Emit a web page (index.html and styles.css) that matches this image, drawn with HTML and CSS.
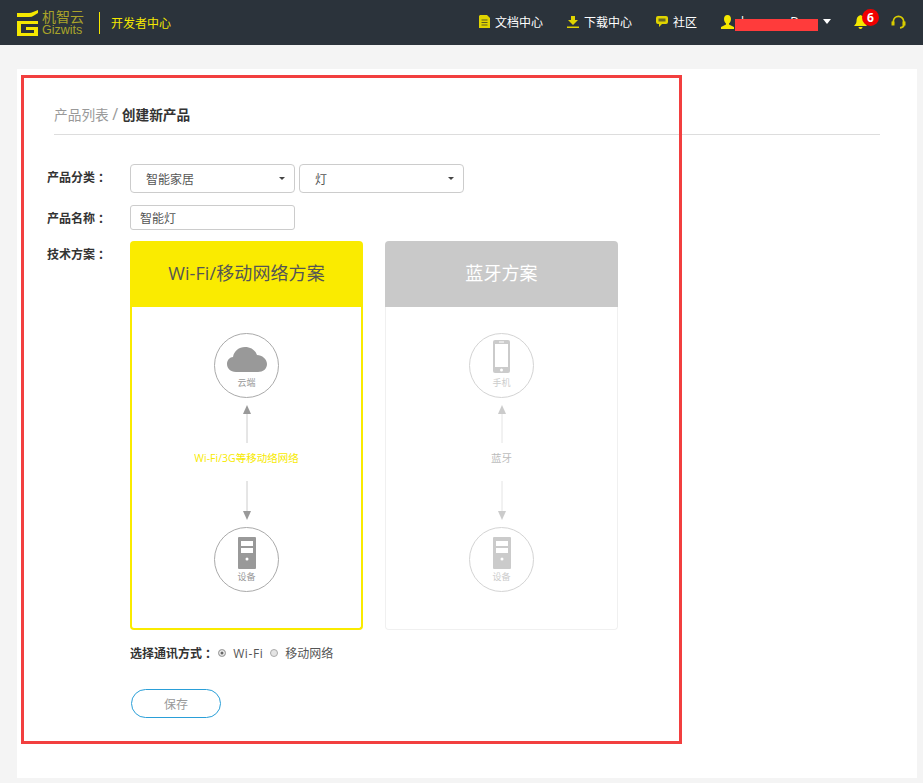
FILE: index.html
```html
<!DOCTYPE html>
<html lang="zh-CN">
<head>
    <meta charset="UTF-8">
    <meta name="viewport" content="width=device-width, initial-scale=1.0">
    <title>创建新产品 - 机智云开发者中心</title>
    <link rel="stylesheet" href="styles.css">
</head>
<body>
    <header class="topbar">
        <a class="logo" href="#">
            <svg class="logo-mark" width="21" height="27" viewBox="0 0 21 27">
                <path d="M0 4H12Q14 4 16 3L21 1V4L17 6.500Q15 8 12 8H0Z" fill="#f5e800"/>
                <path d="M0 12H21V15H4V24H17V21H9V18H21V27H0Z" fill="#f5e800"/>
            </svg>
            <span class="logo-text">
                <span class="logo-cn">机智云</span>
                <span class="logo-en">Gizwits</span>
            </span>
        </a>
        <span class="site-name">开发者中心</span>
        <nav class="topnav">
            <a href="#">
                <svg width="11" height="13" viewBox="0 0 11 13"><path d="M1 0H8L11 3V13H0V1Z" fill="#e0d400"/><path d="M2.500 5H8.500M2.500 7.500H8.500M2.500 10H8.500" stroke="#5c5c20" stroke-width="1"/></svg>
                文档中心
            </a>
            <a href="#">
                <svg width="12" height="12" viewBox="0 0 12 12"><path d="M4 0H8V4H11L6 9L1 4H4ZM0 10.500H12V12H0Z" fill="#e0d400"/></svg>
                下载中心
            </a>
            <a href="#">
                <svg width="12" height="11" viewBox="0 0 12 11"><path d="M2 0H10Q12 0 12 2V6Q12 8 10 8H6L3 11V8H2Q0 8 0 6V2Q0 0 2 0Z" fill="#e0d400"/><path d="M2.500 2.500H9.500V5.500H2.500Z" fill="#6b6a22"/></svg>
                社区
            </a>
            <span class="user">
                <svg width="13" height="14" viewBox="0 0 13 14"><path d="M6.500 0C9 0 10 2 10 4C10 6 9 7.500 8 8.500V9.500L13 12V14H0V12L5 9.500V8.500C4 7.500 3 6 3 4C3 2 4 0 6.500 0Z" fill="#f5e800"/></svg>
                <span class="user-name"><span>l</span><span>D</span></span>
                <span class="redact"></span>
                <span class="caret-white"></span>
            </span>
            <span class="bell">
                <svg width="13" height="14" viewBox="0 0 13 14"><path d="M6.500 0C9.500 1 10.500 3 10.500 6C10.500 8 11.500 9.500 13 11H0C1.500 9.500 2.500 8 2.500 6C2.500 3 3.500 1 6.500 0ZM4.500 12H8.500C8.500 14.500 4.500 14.500 4.500 12Z" fill="#f5e800"/></svg>
                <span class="badge">6</span>
            </span>
            <svg class="headset" width="15" height="14" viewBox="0 0 15 14"><path d="M2.200 9V7C2.200 -0.500 12.800 -0.500 12.800 7V10Q12.800 12.500 9 12.800" fill="none" stroke="#d8cc00" stroke-width="1.800"/><path d="M0.500 6.500H3.500V10.500H0.500ZM11.500 6.500H14.500V10.500H11.500Z" fill="#d8cc00"/></svg>
        </nav>
    </header>

    <main class="page">
        <section class="panel">
            <div class="crumbs"><a href="#">产品列表</a> <i>/</i> <b>创建新产品</b></div>

            <div class="row row-cat">
                <label class="row-label">产品分类 ：</label>
                <div class="fake-select">智能家居<span class="caret"></span></div>
                <div class="fake-select">灯<span class="caret"></span></div>
            </div>
            <div class="row row-name">
                <label class="row-label">产品名称 ：</label>
                <input class="text-input" type="text" value="智能灯">
            </div>
            <div class="row row-plan">
                <label class="row-label">技术方案 ：</label>
                <div class="plan-list">
                    <div class="plan plan-on">
                        <h3 class="plan-head">Wi-Fi/移动网络方案</h3>
                        <div class="plan-body">
                            <div class="node">
                                <svg width="40" height="26" viewBox="0 0 40 26"><path d="M9 26C3 26 0 22 0 18C0 14 3 11 6 11C7 5 12 1 18 1C24 1 28 4 30 9C35 9 40 13 40 18C40 23 36 26 31 26Z" fill="#999"/></svg>
                                <span>云端</span>
                            </div>
                            <svg class="arrow" width="10" height="39" viewBox="0 0 10 39"><path d="M5 9V38" stroke="#ccc" stroke-width="1"/><path d="M5 0L9 9H1Z" fill="#999"/></svg>
                            <p class="link-name">Wi-Fi/3G等移动络网络</p>
                            <svg class="arrow arrow-down" width="10" height="39" viewBox="0 0 10 39"><path d="M5 0V30" stroke="#ccc" stroke-width="1"/><path d="M5 39L9 30H1Z" fill="#999"/></svg>
                            <div class="node node-device">
                                <svg width="18" height="32" viewBox="0 0 18 32"><path d="M1 0H17Q18 0 18 1V31Q18 32 17 32H1Q0 32 0 31V1Q0 0 1 0Z" fill="#999"/><path d="M3 4H15V9H3ZM3 11H15V16H3Z" fill="#fff"/><circle cx="9" cy="22" r="1.500" fill="#fff"/></svg>
                                <span>设备</span>
                            </div>
                        </div>
                    </div>
                    <div class="plan plan-off">
                        <h3 class="plan-head">蓝牙方案</h3>
                        <div class="plan-body">
                            <div class="node node-phone">
                                <svg width="17" height="33" viewBox="0 0 17 33"><path d="M2 0H15Q17 0 17 2V31Q17 33 15 33H2Q0 33 0 31V2Q0 0 2 0Z" fill="#999"/><path d="M2 4H15V27H2Z" fill="#fff"/><circle cx="8.500" cy="30" r="1.500" fill="#fff"/><path d="M6 2H11" stroke="#fff" stroke-width="1"/></svg>
                                <span>手机</span>
                            </div>
                            <svg class="arrow" width="10" height="39" viewBox="0 0 10 39"><path d="M5 9V38" stroke="#ccc" stroke-width="1"/><path d="M5 0L9 9H1Z" fill="#999"/></svg>
                            <p class="link-name">蓝牙</p>
                            <svg class="arrow arrow-down" width="10" height="39" viewBox="0 0 10 39"><path d="M5 0V30" stroke="#ccc" stroke-width="1"/><path d="M5 39L9 30H1Z" fill="#999"/></svg>
                            <div class="node node-device">
                                <svg width="18" height="32" viewBox="0 0 18 32"><path d="M1 0H17Q18 0 18 1V31Q18 32 17 32H1Q0 32 0 31V1Q0 0 1 0Z" fill="#999"/><path d="M3 4H15V9H3ZM3 11H15V16H3Z" fill="#fff"/><circle cx="9" cy="22" r="1.500" fill="#fff"/></svg>
                                <span>设备</span>
                            </div>
                        </div>
                    </div>
                </div>
            </div>

            <div class="comm">
                <b>选择通讯方式 ：</b>
                <span class="radio radio-on"></span><span class="comm-opt comm-wifi">Wi-Fi</span>
                <span class="radio"></span><span class="comm-opt">移动网络</span>
            </div>
            <button class="save" type="button">保存</button>
        </section>
    </main>

    <div class="mark-box"></div>
</body>
</html>
```

FILE: styles.css
```css
* {
    box-sizing: border-box;
}
body {
    font-family: "Open Sans", "Noto Sans CJK SC", sans-serif;
    font-size: 12px;
    color: #333;
    background-color: #f4f4f4;
    margin: 0;
    padding: 0;
}
a {
    color: inherit;
    text-decoration: none;
}
.topbar {
    display: flex;
    align-items: center;
    height: 45px;
    padding: 0 17px;
    background: #2b333b;
}
.logo {
    display: flex;
    align-items: center;
    gap: 4px;
    width: 67px;
}
.logo-text {
    display: flex;
    flex-direction: column;
    color: #a9a32a;
}
.logo-cn {
    font-size: 14px;
    line-height: 15px;
}
.logo-en {
    font-size: 12.500px;
    line-height: 12px;
    font-family: "Liberation Sans", sans-serif;
}
.site-name {
    margin-left: 15px;
    padding-left: 11px;
    height: 22px;
    line-height: 23px;
    border-left: 1px solid #f5e800;
    color: #f5e800;
}
.topnav {
    display: flex;
    align-items: center;
    margin-left: auto;
    margin-top: -2px;
    color: #fff;
}
.topnav a {
    display: flex;
    align-items: center;
    gap: 5px;
    margin-right: 24px;
}
.user {
    position: relative;
    display: flex;
    align-items: center;
    width: 111px;
}
.user-name {
    display: flex;
    justify-content: space-between;
    width: 58px;
    margin-left: 7px;
}
.redact {
    position: absolute;
    left: 14px;
    top: 6px;
    width: 83px;
    height: 12px;
    background: #ff3b3b;
}
.caret-white {
    position: absolute;
    left: 102px;
    top: 6px;
    border-left: 4.500px solid transparent;
    border-right: 4.500px solid transparent;
    border-top: 5px solid #fff;
}
.bell {
    position: relative;
    display: flex;
    width: 37px;
    margin-left: 22px;
}
.badge {
    position: absolute;
    left: 8px;
    top: -6px;
    width: 17px;
    height: 17px;
    border-radius: 50%;
    background: #f00000;
    color: #fff;
    font-size: 12px;
    font-weight: 700;
    line-height: 17px;
    text-align: center;
}
.page {
    padding: 24px 6px 5px 17px;
}
.panel {
    height: 709px;
    padding: 0 37px;
    background: #fff;
}
.crumbs {
    height: 66px;
    padding-top: 35px;
    margin-bottom: 29px;
    border-bottom: 1px solid #ddd;
    font-size: 13.700px;
    line-height: 21px;
    color: #999;
}
.crumbs i {
    font-style: normal;
    font-size: 16px;
}
.crumbs b {
    color: #333;
}
.row {
    display: flex;
    margin-left: -7px;
}
.row-label {
    width: 83px;
    font-weight: 700;
    color: #333;
}
.row-cat {
    align-items: center;
    gap: 4px;
    height: 29px;
}
.row-cat .row-label {
    margin-right: -4px;
    margin-top: -4px;
}
.fake-select {
    position: relative;
    width: 165px;
    height: 29px;
    padding-left: 15px;
    border: 1px solid #ccc;
    border-radius: 4px;
    line-height: 29px;
    color: #555;
}
.caret {
    position: absolute;
    right: 9px;
    top: 12px;
    border-left: 3px solid transparent;
    border-right: 3px solid transparent;
    border-top: 3px solid #444;
}
.row-name {
    align-items: center;
    margin-top: 12px;
}
.text-input {
    width: 165px;
    height: 25px;
    padding: 0 9px;
    border: 1px solid #ccc;
    border-radius: 3px;
    font: inherit;
    color: #555;
}
.row-plan {
    margin-top: 11px;
}
.row-plan .row-label {
    padding-top: 4px;
}
.plan-list {
    display: flex;
    gap: 22px;
}
.plan {
    width: 233px;
    height: 389px;
    border-radius: 4px;
    background: #fff;
}
.plan-head {
    height: 66px;
    margin: 0;
    border-radius: 4px 4px 0 0;
    font-size: 18px;
    font-weight: 400;
    letter-spacing: 0.100px;
    line-height: 64px;
    text-align: center;
}
.plan-body {
    display: flex;
    flex-direction: column;
    align-items: center;
    height: 323px;
    padding-top: 26px;
    border-radius: 0 0 4px 4px;
}
.plan-on .plan-head {
    background: #faeb00;
    color: #555;
}
.plan-on .plan-body {
    border: 2px solid #faeb00;
    border-top: 0;
}
.plan-off .plan-head {
    background: #c9c9c9;
    color: #fff;
}
.plan-off .plan-body {
    border: 1px solid #f0f0f0;
    border-top: 0;
}
.plan-off .node,
.plan-off .arrow,
.plan-off .link-name {
    opacity: 0.5;
}
.node {
    display: flex;
    flex-direction: column;
    align-items: center;
    flex-shrink: 0;
    width: 65px;
    height: 65px;
    padding-top: 12px;
    border: 1px solid #aaa;
    border-radius: 50%;
    background: #fff;
}
.node span {
    margin-top: 5px;
    font-size: 9px;
    line-height: 12px;
    color: #999;
}
.node-device {
    padding-top: 9px;
}
.node-device span {
    margin-top: 2px;
}
.node-phone {
    padding-top: 6px;
}
.node-phone span {
    margin-top: 4px;
}
.arrow {
    display: block;
    margin-top: 7px;
}
.arrow-down {
    margin-top: 16px;
    margin-bottom: 7px;
}
.link-name {
    margin: 7px 0 0;
    font-size: 10.500px;
    line-height: 14px;
    color: #f7ea00;
}
.plan-off .link-name {
    color: #777;
}
.comm {
    display: flex;
    align-items: center;
    height: 18px;
    margin-top: 14px;
    margin-left: 76px;
    color: #555;
}
.comm b {
    color: #333;
    margin-right: 1px;
}
.radio {
    width: 8px;
    height: 8px;
    margin-right: 7px;
    border: 1px solid #aaa;
    border-radius: 50%;
    background: #e4e4e4;
}
.radio-on {
    background: #666;
    box-shadow: inset 0 0 0 1.500px #eee;
}
.comm-opt {
    margin-right: 7px;
}
.comm-wifi {
    letter-spacing: 0.600px;
}
.save {
    display: block;
    width: 90px;
    height: 29px;
    margin: 27px 0 0 77px;
    border: 1px solid #2a9fd8;
    border-radius: 15px;
    background: #fff;
    font: inherit;
    color: #999;
}
.mark-box {
    position: absolute;
    left: 21px;
    top: 75px;
    width: 661px;
    height: 669px;
    border: 3px solid #f23f3f;
    pointer-events: none;
}
```
